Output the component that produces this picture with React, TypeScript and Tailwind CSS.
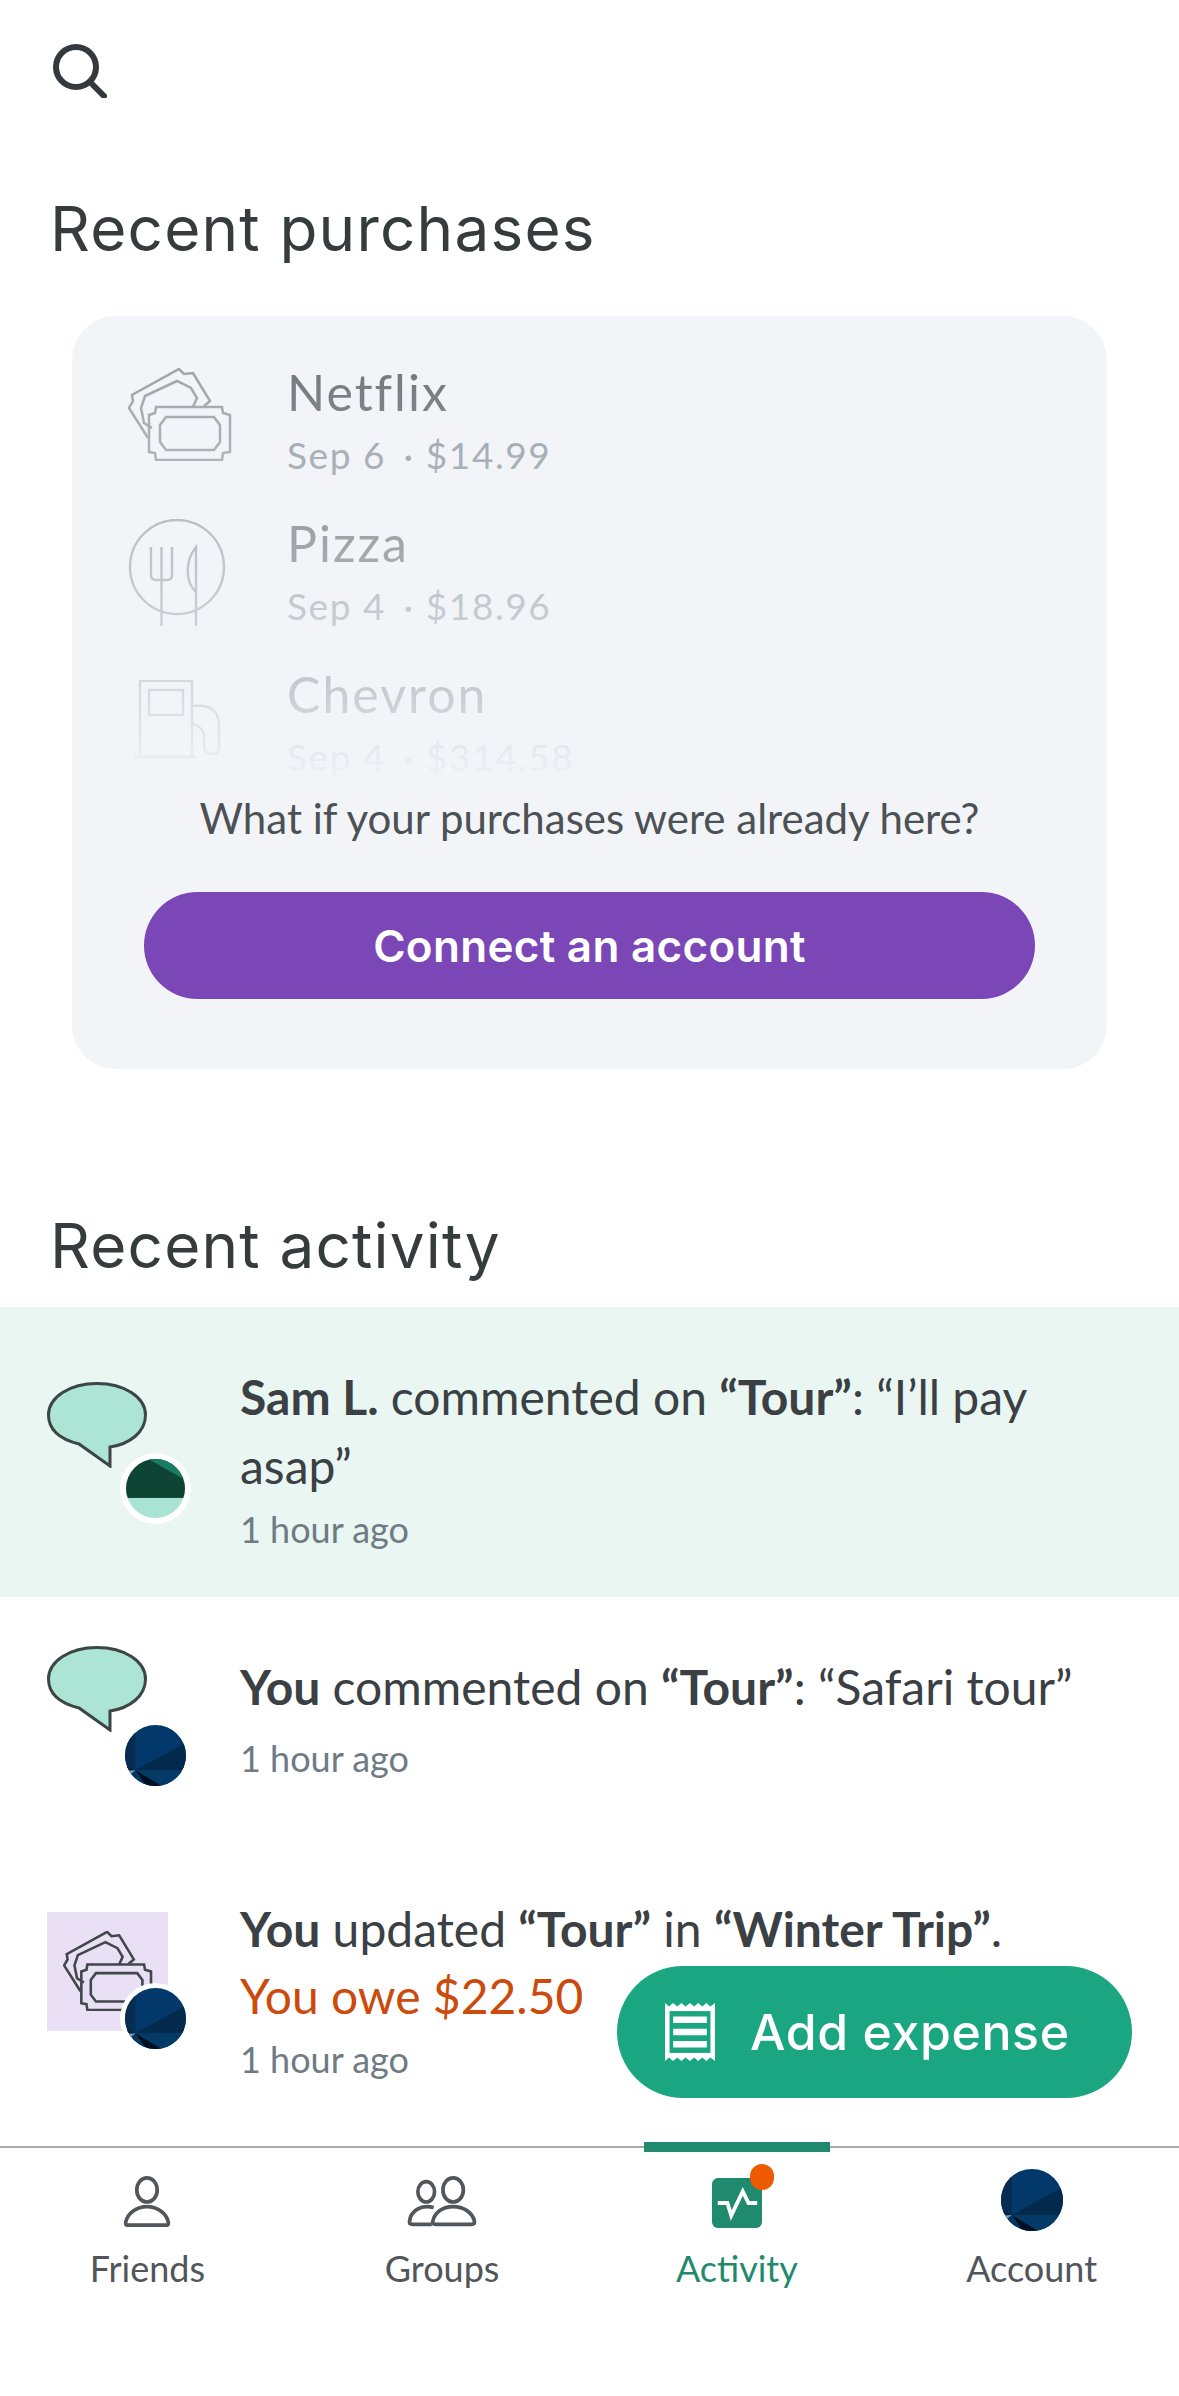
import React from "react";

const headFont = "[font-family:Inter,'Noto_Sans',sans-serif]";

function TicketIcon({ className, stroke, width = 5 }: { className: string; stroke: string; width?: number }) {
  return (
    <svg viewBox="0 0 104 93" className={className} fill="none" stroke={stroke} strokeWidth={width / 2} strokeLinejoin="miter">
      <path d="M20 70 L1 40 L5 33 L4 27 L51 1 L56 6 L65 5 L82 33 L76 38" />
      <path d="M24 60 L16 55 L13 40 L17 28 L49 13 L63 20 L69 30 L65 39" />
      <path d="M28 39 H94 L95 45 L102 47 V84 L95 85 L94 92 H28 L27 85 L21 84 V47 L27 45 Z" />
      <path d="M38 49 H86 L92 57 V74 L86 82 H38 L32 74 V57 Z" />
    </svg>
  );
}

function FoodIcon({ className }: { className: string }) {
  return (
    <svg viewBox="0 0 98 108" className={className} fill="none" stroke="#7c8086" strokeWidth="2.4">
      <circle cx="49" cy="48" r="47" />
      <path d="M23 28 V56 Q23 61 28 61 H39 Q44 61 44 56 V28 M33.5 28 V107" />
      <path d="M68 107 V28 C58 40 56 62 68 73" />
    </svg>
  );
}

function PumpIcon({ className }: { className: string }) {
  return (
    <svg viewBox="0 0 88 80" className={className} fill="none" stroke="#7c8086" strokeWidth="2.4">
      <rect x="6" y="1" width="52" height="76" />
      <rect x="15" y="10" width="34" height="25" />
      <path d="M0 77 H62" />
      <path d="M58 26 C75 24 85 30 85 45 V68 C85 76 72 76 70 68 V55 C70 47 60 45 58 42" />
    </svg>
  );
}

function Bubble({ className }: { className: string }) {
  return (
    <svg viewBox="0 0 100 86" className={className} fill="#ace5d4" stroke="#3d4547" strokeWidth="3">
      <path d="M32 62 C12 57 1.5 47 1.5 33 C1.5 15 23 1.5 50 1.5 C77 1.5 98.5 15 98.5 33 C98.5 50 83 62 63 65 L63 84 Z" />
    </svg>
  );
}

function NavyAvatar({ className }: { className: string }) {
  return (
    <svg viewBox="0 0 100 100" className={className}>
      <defs>
        <clipPath id="navy">
          <circle cx="50" cy="50" r="50" />
        </clipPath>
      </defs>
      <g clipPath="url(#navy)">
        <rect width="100" height="100" fill="#03386a" />
        <rect width="17" height="74" fill="#062c4f" />
        <polygon points="17,74 100,29 100,74" fill="#03294c" />
        <polygon points="17,74 100,74 100,100 60,100" fill="#033a66" />
        <polygon points="17,74 60,100 35,100" fill="#010f22" />
        <polygon points="17,74 35,100 0,100 0,76" fill="#05365f" />
        <polygon points="0,68 17,74 0,72" fill="#0b1d31" />
        <polygon points="0,76 17,74 5,84" fill="#7aa6c2" />
      </g>
    </svg>
  );
}

function GreenAvatar({ className }: { className: string }) {
  return (
    <svg viewBox="0 0 100 100" className={className}>
      <defs>
        <clipPath id="green">
          <circle cx="50" cy="50" r="50" />
        </clipPath>
      </defs>
      <g clipPath="url(#green)">
        <rect width="100" height="100" fill="#a9e3d3" />
        <rect width="100" height="66" fill="#0d4434" />
        <polygon points="38,0 100,0 100,35" fill="#1a7d63" />
      </g>
    </svg>
  );
}

function Purchase({ icon, title, sub }: { icon: React.ReactNode; title: string; sub: string }) {
  return (
    <div className="flex">
      <div className="w-[215px] shrink-0 pl-[56px] pt-[6px]">{icon}</div>
      <div>
        <div className="text-[50px] leading-[60px] tracking-[2px] text-[#3b4145]">{title}</div>
        <div className="mt-[8px] text-[37px] leading-[50px] tracking-[1.6px] text-[#6f7b84]">{sub}</div>
      </div>
    </div>
  );
}

function Tab({ label, active, children }: { label: string; active?: boolean; children: React.ReactNode }) {
  return (
    <div className="relative flex flex-col items-center">
      {active && <div className="absolute -top-[6px] left-0 right-0 mx-auto h-[10px] w-[186px] bg-[#1f8a6d]" />}
      <div className="flex h-[95px] items-end justify-center pb-[15px]">{children}</div>
      <div className={`text-[36px] leading-[50px] ${active ? "text-[#1f8a6d]" : "text-[#51565b]"}`}>{label}</div>
    </div>
  );
}

export default function App() {
  return (
    <div className="relative flex h-[2396px] w-full flex-col overflow-hidden bg-white text-[#3a4043] [font-family:Lato,'Noto_Sans',sans-serif]">
      <main className="min-h-0 flex-1 overflow-hidden">
        <div className="pl-[53px] pt-[44px]">
          <svg viewBox="0 0 54 54" className="block h-[54px] w-[54px]" fill="none" stroke="#33393c" strokeWidth="6" strokeLinecap="round">
            <circle cx="23" cy="23" r="20" />
            <path d="M37 38 L51 52" />
          </svg>
        </div>
        <h2 className={`mt-[96px] pl-[50px] text-[62px] leading-[70px] font-normal tracking-[1.2px] text-[#363b3e] ${headFont}`}>Recent purchases</h2>

        <section className="mx-[72px] mt-[52px] w-[1035px] rounded-[44px] bg-[#f2f4f8] pb-[70px] pt-[46px]">
          <div className="relative flex h-[428px] flex-col gap-[33px] overflow-hidden">
            <Purchase title="Netflix" sub={"Sep 6\u2009 · $14.99"} icon={<TicketIcon className="block h-[93px] w-[104px]" stroke="#7c8086" />} />
            <Purchase title="Pizza" sub={"Sep 4\u2009 · $18.96"} icon={<FoodIcon className="block h-[108px] w-[98px]" />} />
            <Purchase title="Chevron" sub={"Sep 4\u2009 · $314.58"} icon={<div className="pl-[6px] pt-[10px]"><PumpIcon className="block h-[80px] w-[88px]" /></div>} />
            <div className="absolute inset-0 bg-linear-to-b from-[#f2f4f8]/30 via-[#f2f4f8]/78 via-78% to-[#f2f4f8]" />
          </div>
          <p className="text-center text-[42px] leading-[56px] text-[#4b5154]">What if your purchases were already here?</p>
          <button className={`mx-auto mt-[46px] block h-[107px] w-[891px] rounded-[54px] bg-[#7b46b5] text-[44px] font-semibold tracking-[0.3px] text-white ${headFont}`}>Connect an account</button>
        </section>

        <h2 className={`mt-[142px] pl-[50px] text-[62px] leading-[70px] font-normal tracking-[1.2px] text-[#363b3e] ${headFont}`}>Recent activity</h2>

        <div className="mt-[26px]">
          <div className="flex h-[290px] bg-[#e9f6f2] pt-[55px]">
            <div className="relative w-[240px] shrink-0">
              <Bubble className="absolute left-[47px] top-[20px] h-[86px] w-[100px]" />
              <div className="absolute left-[120px] top-[91px] h-[71px] w-[71px] rounded-full bg-white p-[6px]">
                <GreenAvatar className="block h-full w-full" />
              </div>
            </div>
            <div className="pr-[100px]">
              <p className="text-[48px] leading-[69px]"><b>Sam L.</b> commented on <b>“Tour”</b>: “I’ll pay asap”</p>
              <p className="mt-[4px] text-[36px] leading-[50px] text-[#6f7b84]">1 hour ago</p>
            </div>
          </div>

          <div className="flex h-[243px] pt-[55px]">
            <div className="relative w-[240px] shrink-0">
              <Bubble className="absolute left-[47px] top-[-6px] h-[86px] w-[100px]" />
              <NavyAvatar className="absolute left-[125px] top-[73px] h-[61px] w-[61px]" />
            </div>
            <div>
              <p className="text-[48px] leading-[69px]"><b>You</b> commented on <b>“Tour”</b>: “Safari tour”</p>
              <p className="mt-[12px] text-[36px] leading-[50px] text-[#6f7b84]">1 hour ago</p>
            </div>
          </div>

          <div className="flex pt-[55px]">
            <div className="relative w-[240px] shrink-0">
              <div className="absolute left-[47px] top-[17px] flex h-[119px] w-[121px] items-start justify-center bg-[#e9e0f6] pt-[19px]">
                <TicketIcon className="block h-[80px] w-[90px]" stroke="#41474a" width={6} />
              </div>
              <div className="absolute left-[120px] top-[88px] h-[71px] w-[71px] rounded-full bg-white p-[5px]">
                <NavyAvatar className="block h-full w-full" />
              </div>
            </div>
            <div>
              <p className="text-[48px] leading-[67px]"><b>You</b> updated <b>“Tour”</b> in <b>“Winter Trip”</b>.</p>
              <p className="text-[48px] leading-[67px] text-[#cc4a0b]">You owe $22.50</p>
              <p className="mt-[5px] text-[36px] leading-[50px] text-[#6f7b84]">1 hour ago</p>
            </div>
          </div>
        </div>
      </main>

      <button className={`absolute left-[617px] top-[1966px] flex h-[132px] w-[515px] items-center rounded-[66px] bg-[#1aa680] pl-[44px] text-[50px] font-medium tracking-[0.6px] text-white ${headFont}`}>
        <svg viewBox="0 0 57 66" className="mr-[31px] h-[60px] w-[58px]" fill="none">
          <path d="M1 1 L5.5 5 L10 1 L14.5 5 L19 1 L23.5 5 L28.5 1 L33 5 L37.5 1 L42 5 L46.5 1 L51 5 L56 1 V65 L51 61 L46.5 65 L42 61 L37.5 65 L33 61 L28.5 65 L23.5 61 L19 65 L14.5 61 L10 65 L5.5 61 L1 65 Z" fill="#fff" />
          <rect x="6" y="10" width="45" height="46" fill="#1aa680" />
          <path d="M10 19.5 H47 M10 33 H47 M10 46.5 H47" stroke="#fff" strokeWidth="7" />
        </svg>
        Add expense
      </button>

      <nav className="grid h-[250px] shrink-0 grid-cols-4 border-t-2 border-[#a9aaab] bg-white">
        <Tab label="Friends">
          <svg viewBox="0 0 50 56" className="h-[52px] w-[48px]" fill="none" stroke="#51565b" strokeWidth="4">
            <ellipse cx="25" cy="15" rx="11" ry="13" />
            <path d="M4 53 Q2 53 2 50 C4 40 14 33 25 33 C36 33 46 40 48 50 Q48 53 46 53 Z" />
          </svg>
        </Tab>
        <Tab label="Groups">
          <svg viewBox="0 0 74 56" className="h-[52px] w-[72px]" fill="none" stroke="#51565b" strokeWidth="4">
            <ellipse cx="20" cy="17" rx="9" ry="11" />
            <ellipse cx="49" cy="15" rx="11" ry="13" />
            <path d="M28 34 C14 30 3 38 2 49 Q2 52 5 52 H26" />
            <path d="M30 52 Q27 52 27 49 C29 39 38 33 49 33 C60 33 70 39 72 49 Q72 52 69 52 Z" />
          </svg>
        </Tab>
        <Tab label="Activity" active>
          <div className="relative h-[50px] w-[50px] rounded-[6px] bg-[#1f8a6d]">
            <svg viewBox="0 0 50 52" className="block h-full w-full" fill="none" stroke="#fff" strokeWidth="4">
              <path d="M5 26 H15 L19 39 L31 14 L37 26 H46" />
            </svg>
            <div className="absolute -right-[12px] -top-[14px] h-[26px] w-[24px] rounded-full bg-[#ee5a00]" />
          </div>
        </Tab>
        <Tab label="Account">
          <NavyAvatar className="mb-[-3px] block h-[62px] w-[62px]" />
        </Tab>
      </nav>
    </div>
  );
}
